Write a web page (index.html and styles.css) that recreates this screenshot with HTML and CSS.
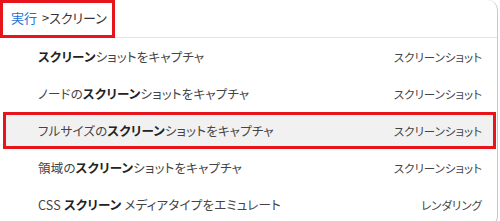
FILE: index.html
```html
<!DOCTYPE html>
<html lang="ja">
<head>
<meta charset="utf-8">
<link rel="stylesheet" href="styles.css">
</head>
<body>
<div class="panel">
  <div class="header">
    <span class="query"><span class="cmd">実行</span> &gt;スクリーン</span>
  </div>
  <ul class="list">
    <li class="row"><span class="label"><b>スクリーン</b>ショットをキャプチャ</span><span class="cat">スクリーンショット</span></li>
    <li class="row"><span class="label">ノードの<b>スクリーン</b>ショットをキャプチャ</span><span class="cat">スクリーンショット</span></li>
    <li class="row selected"><span class="label">フルサイズの<b>スクリーン</b>ショットをキャプチャ</span><span class="cat">スクリーンショット</span></li>
    <li class="row"><span class="label">領域の<b>スクリーン</b>ショットをキャプチャ</span><span class="cat">スクリーンショット</span></li>
    <li class="row"><span class="label">CSS <b>スクリーン</b> メディアタイプをエミュレート</span><span class="cat">レンダリング</span></li>
  </ul>
  <div class="mark"></div>
</div>
</body>
</html>
```

FILE: styles.css
```css
html, body {
  margin: 0;
  padding: 0;
  background: #ffffff;
}
body {
  width: 500px;
  height: 221px;
  overflow: hidden;
  font-family: "Noto Sans CJK JP", "Noto Sans", sans-serif;
  font-size: 12px;
  color: #444;
}
.panel {
  position: relative;
  width: 498px;
  height: 226px;
  background: #fff;
  border-right: 1px solid #c8c8c8;
  border-bottom: 1px solid #c8c8c8;
  border-radius: 0 10px 10px 0;
  box-sizing: border-box;
  overflow: hidden;
}
.header {
  height: 37px;
  border-bottom: 1px solid #dde5f0;
  display: flex;
  align-items: center;
  padding-left: 11px;
  font-size: 13px;
  color: #333;
  font-feature-settings: "palt";
}
.query {
  position: relative;
  top: -1px;
}
.cmd {
  color: #1a6fd8;
  margin-right: 2px;
}
.mark {
  position: absolute;
  left: 0;
  top: 0;
  width: 115px;
  height: 38px;
  border: 3px solid #e8141b;
  box-sizing: border-box;
}
.list {
  list-style: none;
  margin: 0;
  padding: 0;
}
.row {
  height: 37px;
  margin: 0 1px 0 3px;
  padding: 0 14px 0 35px;
  display: flex;
  align-items: center;
  justify-content: space-between;
  box-sizing: border-box;
}
.label {
  font-size: 12.5px;
  font-feature-settings: "palt";
  letter-spacing: 0.2px;
}
.label b {
  font-weight: 700;
  color: #222;
}
.cat {
  font-size: 11.5px;
  font-feature-settings: "palt";
  color: #444;
}
.selected {
  background: #f1f1f1;
  outline: 3px solid #e8141b;
  outline-offset: -3px;
}
```
